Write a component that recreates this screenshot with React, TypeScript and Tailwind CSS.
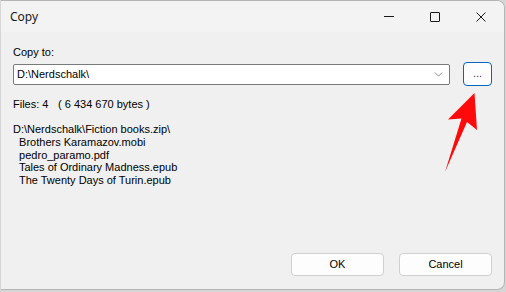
import { ChevronDown } from 'lucide-react'

const files = [
  'Brothers Karamazov.mobi',
  'pedro_paramo.pdf',
  'Tales of Ordinary Madness.epub',
  'The Twenty Days of Turin.epub',
]

export default function App() {
  return (
    <div className="relative w-[506px] h-[292px] bg-[#d6d6d6] overflow-hidden">
      <div className="ml-[1px] w-[504px] h-[290px] flex flex-col bg-[#f0f0f0] border-r border-b border-t border-[#b5b5b5] rounded-tr-[8px] rounded-br-[8px] overflow-hidden">
        {/* title bar */}
        <div className="h-[31px] flex items-center bg-[#f3f3f3] shrink-0">
          <span className="pl-[9px] pt-[1px] text-[12px] text-[#1a1a1a] [font-family:'Noto_Sans',sans-serif] flex-1">
            Copy
          </span>
          <div className="flex h-full">
            <div className="w-[46px] flex items-center justify-center">
              <div className="w-[10px] h-[1px] bg-[#1a1a1a]" />
            </div>
            <div className="w-[46px] flex items-center justify-center">
              <div className="w-[10px] h-[10px] border border-[#1a1a1a] rounded-[1px]" />
            </div>
            <div className="w-[46px] flex items-center justify-center">
              <svg width="10" height="10" viewBox="0 0 10 10">
                <path d="M0.5 0.5 L9.5 9.5 M9.5 0.5 L0.5 9.5" stroke="#1a1a1a" strokeWidth="1" />
              </svg>
            </div>
          </div>
        </div>

        {/* body */}
        <div className="flex-1 flex flex-col px-[12px] text-[11px] text-black [font-family:'Liberation_Sans',Arial,sans-serif]">
          <div className="mt-[14px] leading-[13px]">Copy to:</div>
          <div className="mt-[3px] flex items-center">
            <div className="w-[438px] h-[21px] mt-[1px] bg-white border border-[#7a7a7a] rounded-[2px] flex items-center pl-[3px] pr-[4px]">
              <span className="flex-1">D:\Nerdschalk\</span>
              <ChevronDown className="w-[13px] h-[13px] text-[#555]" strokeWidth={1.25} />
            </div>
            <div className="ml-[13px] w-[29px] h-[24px] bg-[#fdfdfd] border border-[#0067c0] rounded-[4px] flex items-center justify-center text-[#5a1a7a] leading-none pb-[2px]">
              ...
            </div>
          </div>
          <div className="mt-[12px] leading-[13px] flex">
            <span className="w-[45px]">Files: 4</span>
            <span className="whitespace-pre">( 6 434 670 bytes )</span>
          </div>
          <div className="mt-[12px] leading-[12.75px] whitespace-pre">
            <div>D:\Nerdschalk\Fiction books.zip\</div>
            {files.map((f) => (
              <div key={f}>{'  ' + f}</div>
            ))}
          </div>
          <div className="mt-auto mb-[13px] flex justify-end gap-[15px]">
            <button className="w-[93px] h-[23px] bg-[#fdfdfd] border border-[#d0d0d0] rounded-[4px] text-[11px]">
              OK
            </button>
            <button className="w-[93px] h-[23px] bg-[#fdfdfd] border border-[#d0d0d0] rounded-[4px] text-[11px]">
              Cancel
            </button>
          </div>
        </div>
      </div>

      {/* red arrow annotation */}
      <svg className="absolute left-0 top-0 pointer-events-none" width="506" height="292" viewBox="0 0 506 292">
        <polygon points="474.5,93 477,130 467,122 445,172 461.5,118.5 448,119.5" fill="#ff0a0a" />
      </svg>
    </div>
  )
}
